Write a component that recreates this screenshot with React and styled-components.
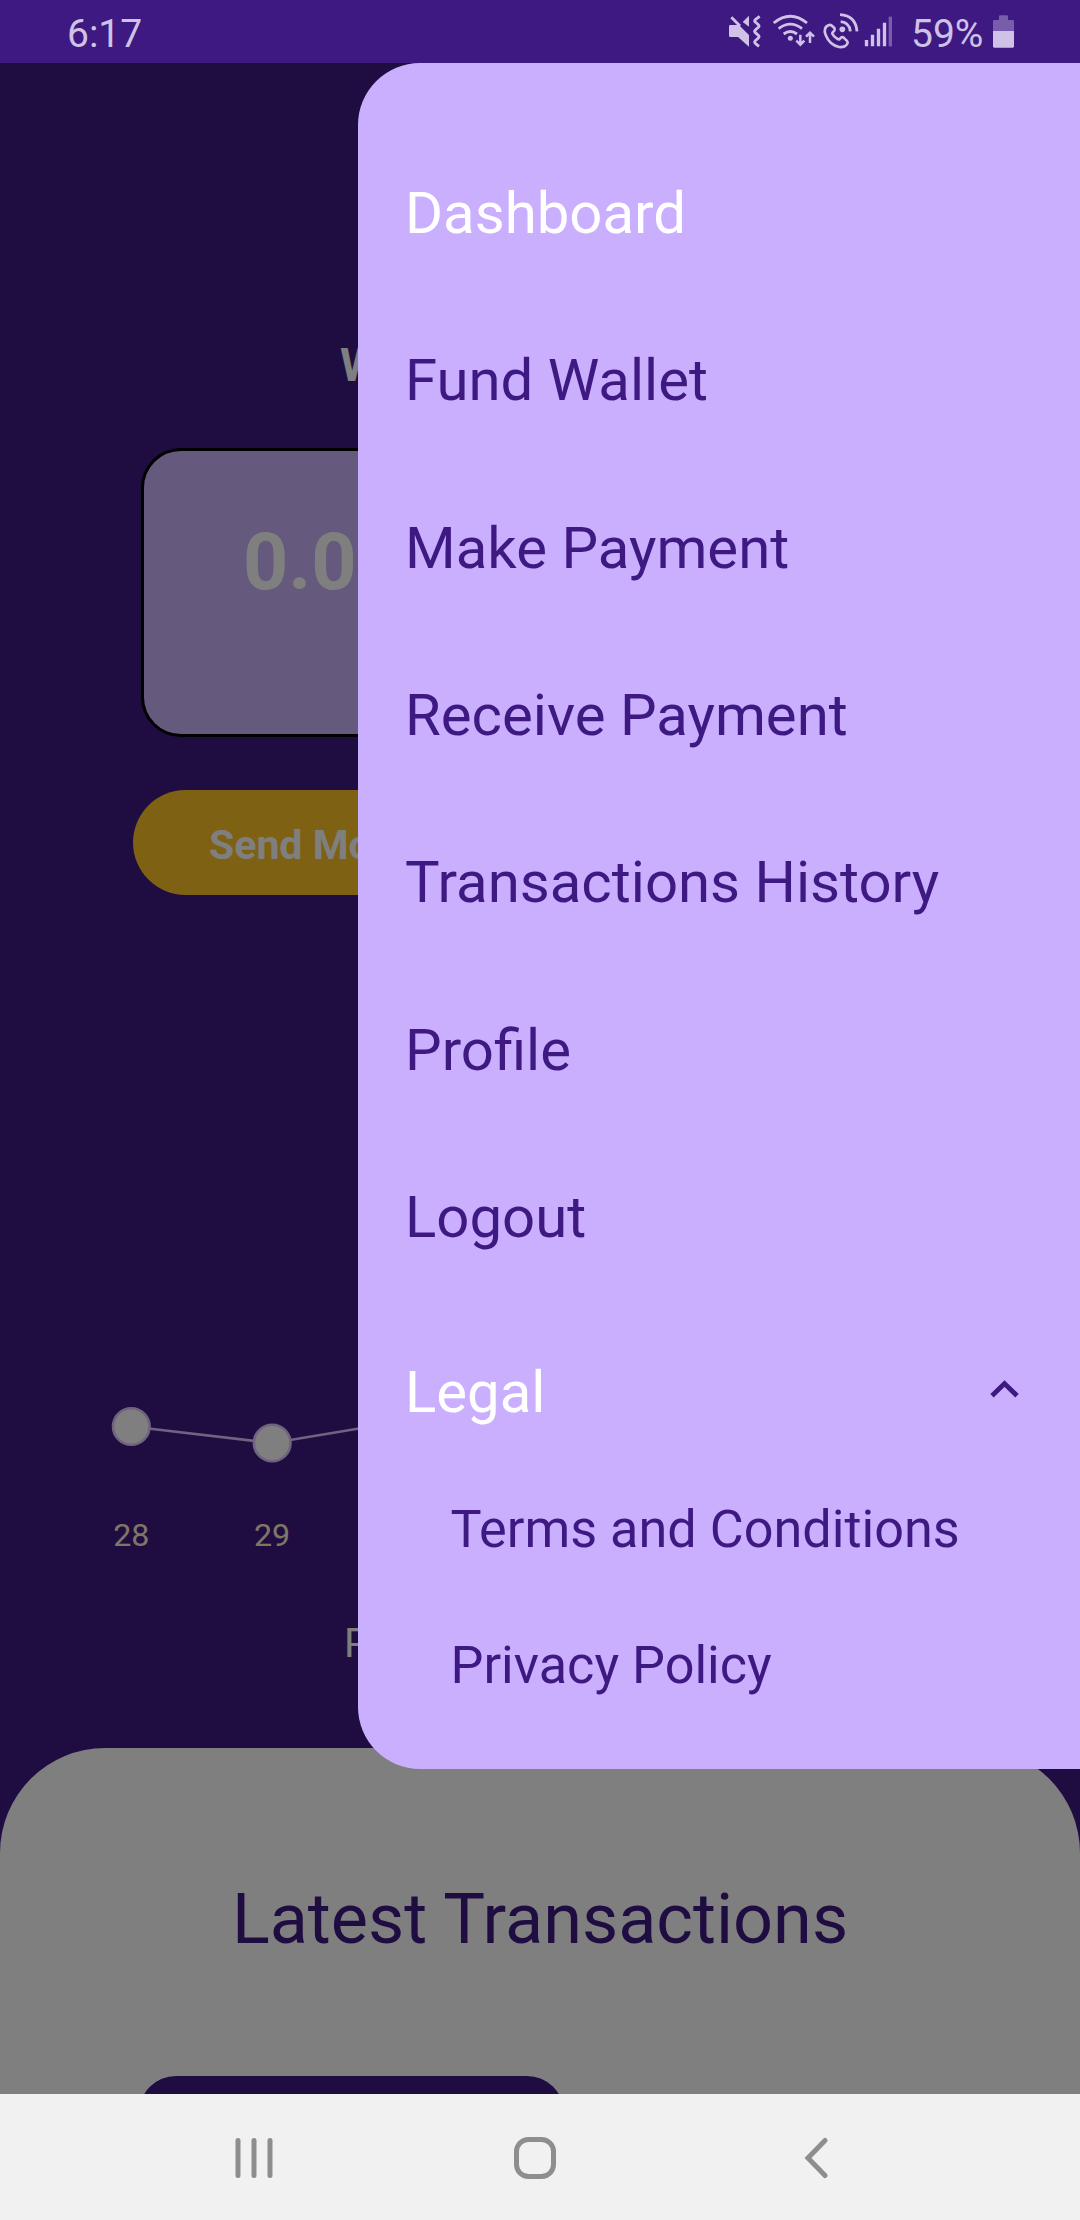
import React from 'react';
import styled, { createGlobalStyle } from 'styled-components';

const color = {
  MAIN: '#3e1982',
  LIGHT: '#caafff',
  CARD: '#cab2fd',
  GOLD: '#fdc324',
  WHITE: '#ffffff',
  STATUS: '#cfc2e6',
  NAV: '#f1f1f1',
  NAV_ICON: '#8e8e8e',
};

const GlobalStyle = createGlobalStyle`
  * {
    box-sizing: border-box;
  }
  body {
    margin: 0;
    font-family: Roboto, sans-serif;
  }
`;

const Screen = styled.div`
  display: flex;
  flex-direction: column;
  width: 1080px;
  height: 2220px;
  overflow: hidden;
`;

const StatusBar = styled.header`
  display: flex;
  align-items: center;
  flex-shrink: 0;
  height: 63px;
  padding: 5px 66px 0 67px;
  color: ${color.STATUS};
  background-color: ${color.MAIN};
  font-size: 39px;
  line-height: 46px;
`;

const StatusIcons = styled.div`
  display: flex;
  align-items: center;
  margin: -6px 0 0 auto;
  svg {
    display: block;
  }
`;

const Battery = styled.span`
  width: 70px;
  margin: 6px 12px 0 18px;
  white-space: nowrap;
`;

const Content = styled.main`
  position: relative;
  flex-shrink: 0;
  height: 2031px;
  overflow: hidden;
  background-color: ${color.MAIN};
`;

const Page = styled.div`
  display: flex;
  flex-direction: column;
  height: 100%;
  padding-top: 274px;
  color: ${color.WHITE};
  > * {
    flex-shrink: 0;
  }
`;

const WalletTitle = styled.h2`
  margin: 0 0 55px;
  padding-left: 340px;
  font-size: 46.8px;
  line-height: 56px;
`;

const WalletCard = styled.section`
  height: 289px;
  margin: 0 141px;
  padding: 65px 0 0 99px;
  border: 3px solid #000;
  border-radius: 40px;
  background-color: ${color.CARD};
`;

const Amount = styled.div`
  font-size: 79px;
  font-weight: 700;
  line-height: 92px;
`;

const SendButton = styled.button`
  width: 400px;
  height: 105px;
  margin: 53px 0 0 133px;
  padding: 4px 0 0 76px;
  border: none;
  border-radius: 53px;
  color: ${color.WHITE};
  background-color: ${color.GOLD};
  font-family: inherit;
  font-size: 41px;
  font-weight: 700;
  text-align: left;
`;

const Chart = styled.svg`
  display: block;
  margin-top: 145px;
`;

const ChartLabels = styled.div`
  display: flex;
  margin: 36px 0 0 61px;
  color: #ffeccf;
  font-size: 32.2px;
  line-height: 38px;
`;

const ChartLabel = styled.span`
  width: 140.7px;
  text-align: center;
`;

const ChartTitle = styled.div`
  margin: 65px 0 81px;
  padding-left: 344px;
  font-size: 41px;
  line-height: 48px;
`;

const Sheet = styled.section`
  height: 346px;
  padding-top: 130px;
  border-radius: 105px 105px 0 0;
  color: ${color.MAIN};
  background-color: ${color.WHITE};
`;

const SheetTitle = styled.h1`
  margin: 0 0 116px;
  font-size: 70.2px;
  font-weight: 400;
  line-height: 82px;
  text-align: center;
`;

const SheetButton = styled.div`
  width: 425px;
  height: 100px;
  margin-left: 139px;
  border-radius: 37px;
  background-color: ${color.MAIN};
`;

const Scrim = styled.div`
  position: absolute;
  inset: 0;
  background-color: rgba(0, 0, 0, 0.5);
`;

const Drawer = styled.nav`
  position: absolute;
  top: 0;
  right: 0;
  display: flex;
  flex-direction: column;
  width: 722px;
  height: 1706px;
  padding: 66.4px 61px 0 47px;
  border-radius: 62px 0 0 62px;
  background-color: ${color.LIGHT};
`;

const DrawerItem = styled.div`
  display: flex;
  align-items: center;
  justify-content: space-between;
  flex-shrink: 0;
  height: 167.3px;
  color: ${({ $active }) => ($active ? color.WHITE : color.MAIN)};
  font-size: 58.1px;
`;

const DrawerGroup = styled(DrawerItem)`
  height: 140px;
  margin-top: 21.5px;
  svg {
    margin-bottom: 5px;
  }
`;

const DrawerSubItem = styled(DrawerItem)`
  height: 136px;
  padding-left: 45.500px;
  font-size: 52.2px;
`;

const NavBar = styled.footer`
  display: flex;
  align-items: center;
  justify-content: space-between;
  flex-shrink: 0;
  height: 126px;
  padding: 2px 250px 0 234px;
  background-color: ${color.NAV};
`;

const HomeIcon = styled.svg`
  margin-right: 8px;
`;

const menu = [
  'Dashboard',
  'Fund Wallet',
  'Make Payment',
  'Receive Payment',
  'Transactions History',
  'Profile',
  'Logout',
];

const legal = ['Terms and Conditions', 'Privacy Policy'];

const points = [
  { day: 28, x: 131.3, y: 386.5 },
  { day: 29, x: 272.2, y: 403 },
  { day: 30, x: 413, y: 379.5 },
];

function StatusGlyphs() {
  return (
    <svg width="164" height="36" viewBox="57 39 492 108" fill="none" stroke={color.STATUS} strokeWidth="8.5">
      {/* muted speaker with vibration */}
      <path d="M61 75h17l8-1 31 31v35L84 111H61q-4 0-4-4V79q0-4 4-4z" fill={color.STATUS} stroke="none" />
      <path d="M64 52l26 26" />
      <path d="M117 47v33L98 66z" fill={color.STATUS} stroke="none" />
      <path d="M149 49l-13 10q-4 4 0 7l9 8q4 4 0 8l-9 8q-4 4 0 8l9 8q4 4 0 8l-9 8q-4 4 0 8l11 9" />
      {/* wifi */}
      <path d="M191 69Q241 28 291 69M206 86Q241 59 276 86M221 102Q241 87 261 102" />
      <circle cx="241" cy="115" r="7.500" fill={color.STATUS} stroke="none" />
      <path d="M271 104v29M259 122l12 12 12-12M300 129v-30M288 110l12-12 12 12" strokeWidth="7.5" />
      {/* wifi call */}
      <path
        d="M355 76C344 81 342 92 347 105C354 123 369 137 387 141C400 143 412 137 413 128Q413 125 410 122L401 113Q397 110 393 113L388 118Q386 119 383 117Q371 110 367 101Q366 99 368 97L373 92Q376 88 373 84L364 76Q360 73 355 76Z"
        strokeWidth="8"
      />
      <path d="M390 44Q437 47 441 94M392 65Q418 67 421 94" />
      <circle cx="397" cy="88" r="8.500" fill={color.STATUS} stroke="none" />
      {/* signal */}
      <path d="M469.500 120v19M487.500 104v35M505.500 86v53M523.500 68v71" strokeWidth="10" />
      <path d="M541 50v89" strokeWidth="10" opacity="0.4" />
    </svg>
  );
}

function BatteryGlyph() {
  return (
    <svg width="21" height="33" viewBox="849 45 63 99" fill={color.STATUS}>
      <path d="M849 93V64q0-4 4-4h14V49q0-3 3-3h21q3 0 3 3v11h14q4 0 4 4v29z" opacity="0.4" />
      <path d="M849 93h63v46q0 4-4 4h-55q-4 0-4-4z" />
    </svg>
  );
}

export default function App() {
  return (
    <Screen>
      <GlobalStyle />
      <StatusBar>
        <span>6:17</span>
        <StatusIcons>
          <StatusGlyphs />
          <Battery>59%</Battery>
          <BatteryGlyph />
        </StatusIcons>
      </StatusBar>
      <Content>
        <Page>
          <WalletTitle>Wallet Balance</WalletTitle>
          <WalletCard>
            <Amount>0.00</Amount>
          </WalletCard>
          <SendButton>Send Money</SendButton>
          <Chart width="1080" height="440" fill="none" stroke="#dfc6ff" strokeWidth="2.6">
            <polyline points={points.map((p) => `${p.x},${p.y}`).join(' ')} />
            {points.map((p) => (
              <circle key={p.day} cx={p.x} cy={p.y} r="18.300" fill={color.WHITE} />
            ))}
          </Chart>
          <ChartLabels>
            {points.map((p) => (
              <ChartLabel key={p.day}>{p.day}</ChartLabel>
            ))}
          </ChartLabels>
          <ChartTitle>Payment History</ChartTitle>
          <Sheet>
            <SheetTitle>Latest Transactions</SheetTitle>
            <SheetButton />
          </Sheet>
        </Page>
        <Scrim />
        <Drawer>
          {menu.map((name, i) => (
            <DrawerItem key={name} $active={i === 0}>{name}</DrawerItem>
          ))}
          <DrawerGroup $active>
            <span>Legal</span>
            <svg width="29" height="18" viewBox="0 0 29 18" fill="none" stroke={color.MAIN} strokeWidth="4.800">
              <path d="M2 15.700L14.500 3.500L27 15.700" />
            </svg>
          </DrawerGroup>
          {legal.map((name) => (
            <DrawerSubItem key={name}>{name}</DrawerSubItem>
          ))}
        </Drawer>
      </Content>
      <NavBar>
        <svg width="40" height="42" fill="none" stroke={color.NAV_ICON} strokeWidth="5" strokeLinecap="round">
          <path d="M4 3.500v35M20 3.500v35M36 3.500v35" />
        </svg>
        <HomeIcon width="42" height="42" fill="none" stroke={color.NAV_ICON} strokeWidth="5">
          <rect x="2.500" y="2.500" width="37" height="37" rx="12" />
        </HomeIcon>
        <svg width="26" height="42" fill="none" stroke={color.NAV_ICON} strokeWidth="5" strokeLinecap="round">
          <path d="M21 3.500L4 21l17 17.500" />
        </svg>
      </NavBar>
    </Screen>
  );
}
